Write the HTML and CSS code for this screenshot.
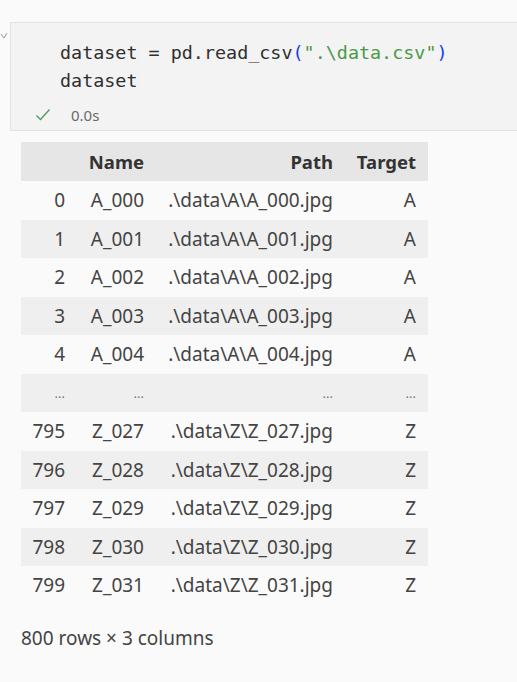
FILE: index.html
```html
<!DOCTYPE html>
<html>
<head>
<meta charset="utf-8">
<link rel="stylesheet" href="styles.css">
</head>
<body>
<div class="cell">
  <svg class="chev" width="8" height="8" viewBox="0 0 8 8"><path d="M1 2 L4 6 L7 1" fill="none" stroke="#9a9a9a" stroke-width="1"/></svg>
  <div class="input">
    <pre class="code">dataset = pd.read_csv<span class="p">(</span><span class="s">".\data.csv"</span><span class="p">)</span>
dataset</pre>
    <div class="status">
      <svg class="check" width="16" height="14" viewBox="0 0 16 14"><path d="M1.5 7.5 L5.5 11.5 L14.5 1.5" fill="none" stroke="#4b9b5a" stroke-width="1.3"/></svg>
      <span class="time">0.0s</span>
    </div>
  </div>
</div>
<div class="output">
  <table class="df">
    <colgroup><col class="c0"><col class="c1"><col class="c2"><col class="c3"></colgroup>
    <thead>
      <tr><th></th><th>Name</th><th>Path</th><th>Target</th></tr>
    </thead>
    <tbody>
      <tr><th>0</th><td>A_000</td><td>.\data\A\A_000.jpg</td><td>A</td></tr>
      <tr><th>1</th><td>A_001</td><td>.\data\A\A_001.jpg</td><td>A</td></tr>
      <tr><th>2</th><td>A_002</td><td>.\data\A\A_002.jpg</td><td>A</td></tr>
      <tr><th>3</th><td>A_003</td><td>.\data\A\A_003.jpg</td><td>A</td></tr>
      <tr><th>4</th><td>A_004</td><td>.\data\A\A_004.jpg</td><td>A</td></tr>
      <tr class="dots"><th>...</th><td>...</td><td>...</td><td>...</td></tr>
      <tr><th>795</th><td>Z_027</td><td>.\data\Z\Z_027.jpg</td><td>Z</td></tr>
      <tr><th>796</th><td>Z_028</td><td>.\data\Z\Z_028.jpg</td><td>Z</td></tr>
      <tr><th>797</th><td>Z_029</td><td>.\data\Z\Z_029.jpg</td><td>Z</td></tr>
      <tr><th>798</th><td>Z_030</td><td>.\data\Z\Z_030.jpg</td><td>Z</td></tr>
      <tr><th>799</th><td>Z_031</td><td>.\data\Z\Z_031.jpg</td><td>Z</td></tr>
    </tbody>
  </table>
  <p class="shape">800 rows × 3 columns</p>
</div>
</body>
</html>
```
FILE: styles.css
```css
html, body {
  margin: 0;
  padding: 0;
  background: #fafafa;
  overflow: hidden;
}
body {
  width: 517px;
  height: 682px;
  font-family: "Noto Sans", "Open Sans", sans-serif;
  color: #3b3b3b;
}
.cell {
  position: relative;
  padding-top: 22px;
  padding-left: 10px;
}
.chev {
  position: absolute;
  left: 0;
  top: 32px;
}
.input {
  width: 520px;
  height: 109px;
  background: #f3f3f3;
  border: 1px solid #e2e2e2;
  border-right: none;
  box-sizing: border-box;
}
.code {
  margin: 0;
  padding: 16px 0 0 49px;
  font-family: "DejaVu Sans Mono", "Liberation Mono", monospace;
  font-size: 18.4px;
  line-height: 28px;
  color: #2f2f2f;
}
.code .s { color: #4a9a48; }
.code .p { color: #1a3cf5; }
.status {
  display: flex;
  align-items: center;
  padding: 10px 0 0 24px;
  height: 20px;
}
.check { margin-right: 20px; }
.time {
  font-size: 15px;
  color: #6a6a6a;
}
.output {
  padding: 11px 0 0 21px;
}
.df {
  border-collapse: collapse;
  table-layout: fixed;
  width: 407px;
  font-size: 19px;
  color: #444;
}
.c0 { width: 56px; }
.c1 { width: 79px; }
.c2 { width: 189px; }
.c3 { width: 83px; }
.df th, .df td {
  text-align: right;
  padding: 0 12px 0 0;
  font-weight: normal;
  white-space: nowrap;
  height: 38.5px;
}
.df thead tr { background: #e6e6e6; }
.df thead th {
  font-weight: bold;
  color: #333;
  font-size: 18.5px;
  height: 39px;
}
.df tbody tr:nth-child(even) { background: #efefef; }
.df .dots th, .df .dots td { font-size: 13px; color: #777; }
.shape {
  margin: 20px 0 0 0;
  font-size: 19px;
  color: #444;
}
```
